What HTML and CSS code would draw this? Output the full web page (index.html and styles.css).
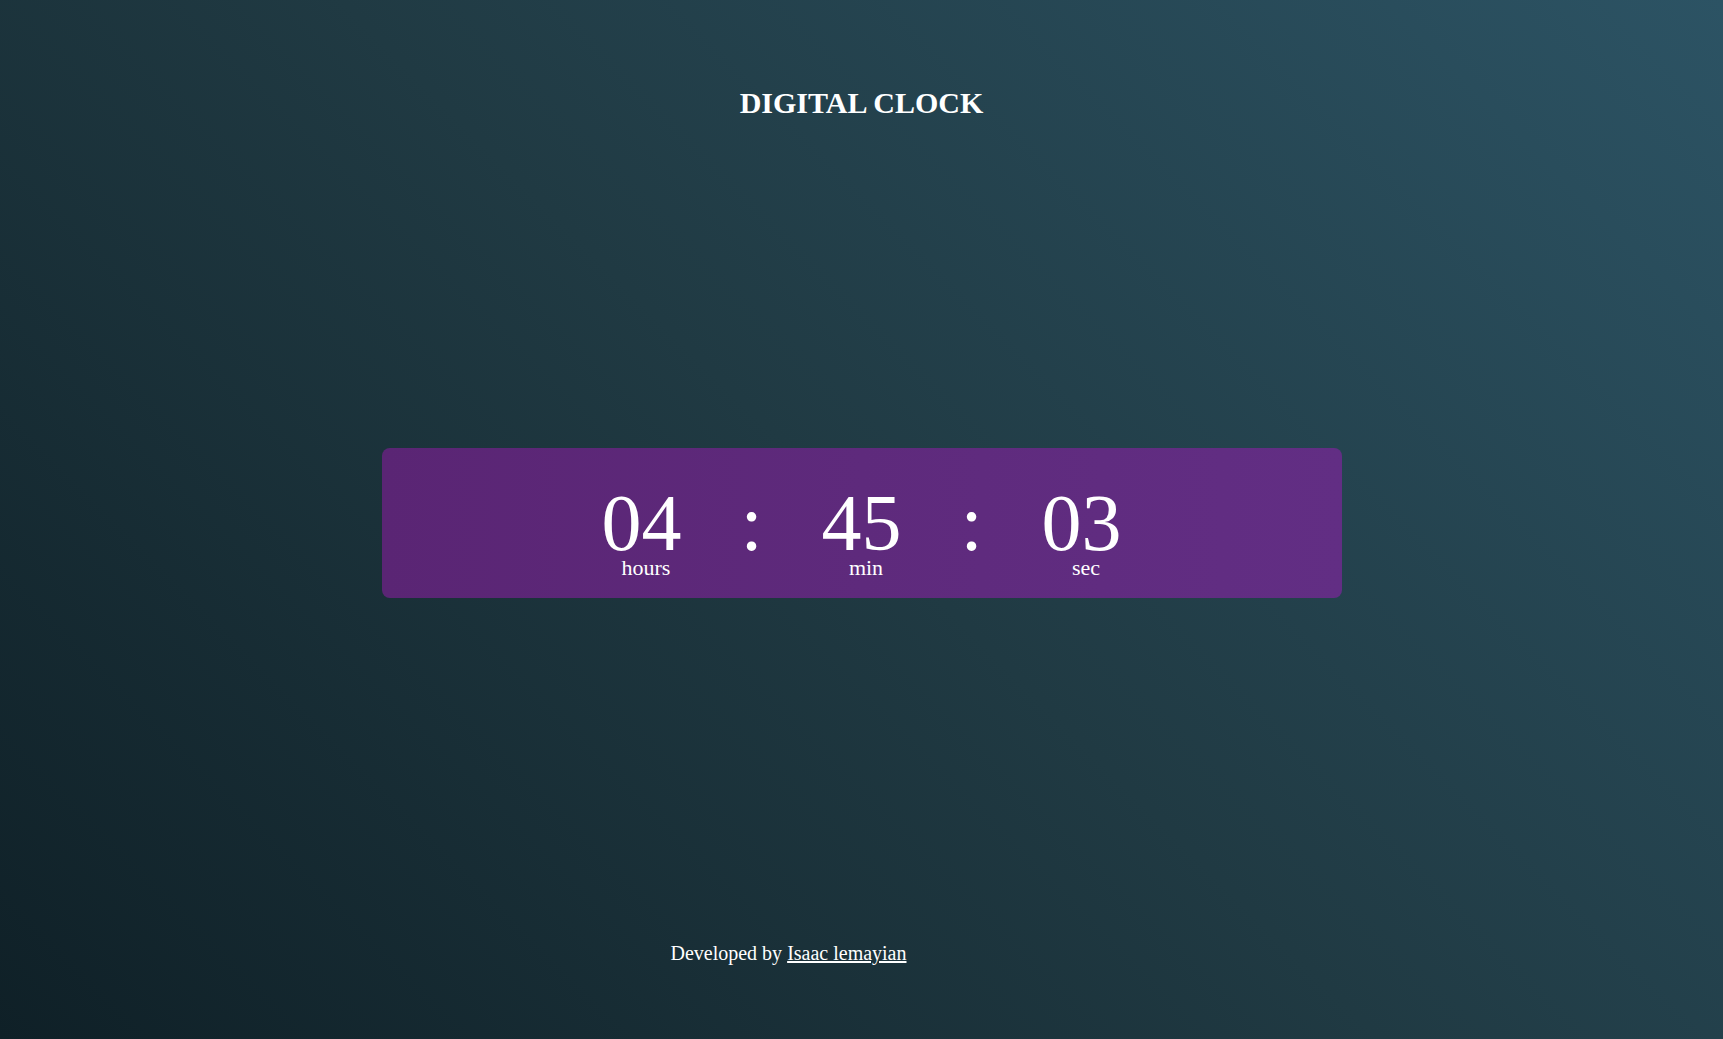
FILE: index.html
```html
<!DOCTYPE html>
<html lang="en">
<head>
<meta charset="utf-8">
<title>Digital Clock</title>
<link rel="stylesheet" href="styles.css">
</head>
<body>
  <header class="header">
    <h1 class="title">DIGITAL CLOCK</h1>
  </header>
  <main class="main">
    <div class="clock">
      <div class="unit">
        <div class="num">04</div>
        <div class="label">hours</div>
      </div>
      <div class="colon">:</div>
      <div class="unit">
        <div class="num">45</div>
        <div class="label">min</div>
      </div>
      <div class="colon">:</div>
      <div class="unit">
        <div class="num">03</div>
        <div class="label">sec</div>
      </div>
    </div>
  </main>
  <footer class="footer">
    <p class="credit">Developed by <a class="link" href="#">Isaac lemayian</a></p>
  </footer>
</body>
</html>
```

FILE: styles.css
```css
html, body {
  margin: 0;
  padding: 0;
}

body {
  min-height: 100vh;
  background: linear-gradient(45deg, #0f2027 0%, #203a43 50%, #2c5364 100%);
  color: #ffffff;
  font-family: "Liberation Serif", "Times New Roman", serif;
  display: flex;
  flex-direction: column;
  align-items: center;
  overflow: hidden;
}

.header {
  padding-top: 86px;
  text-align: center;
}

.title {
  margin: 0;
  font-size: 30px;
  line-height: 34px;
  font-weight: bold;
}

.main {
  margin-top: 328px;
}

.clock {
  box-sizing: border-box;
  width: 960px;
  height: 150px;
  padding-top: 38.5px;
  border-radius: 8px;
  background: linear-gradient(90deg, #5a2574 0%, #5e2a7c 50%, #622e84 100%);
  display: flex;
  justify-content: center;
  align-items: flex-start;
}

.unit {
  width: 100px;
  text-align: center;
}

.num {
  font-size: 80px;
  line-height: 73px;
}

.label {
  font-size: 22px;
  line-height: 16px;
  margin-top: 0.5px;
  padding-left: 9px;
}

.colon {
  width: 120px;
  text-align: center;
  font-size: 80px;
  line-height: 73px;
}

.footer {
  margin-top: 344px;
  padding-right: 146px;
  text-align: center;
}

.credit {
  margin: 0;
  font-size: 20px;
  line-height: 23px;
}

.link {
  color: #ffffff;
  text-decoration: underline;
}
```
